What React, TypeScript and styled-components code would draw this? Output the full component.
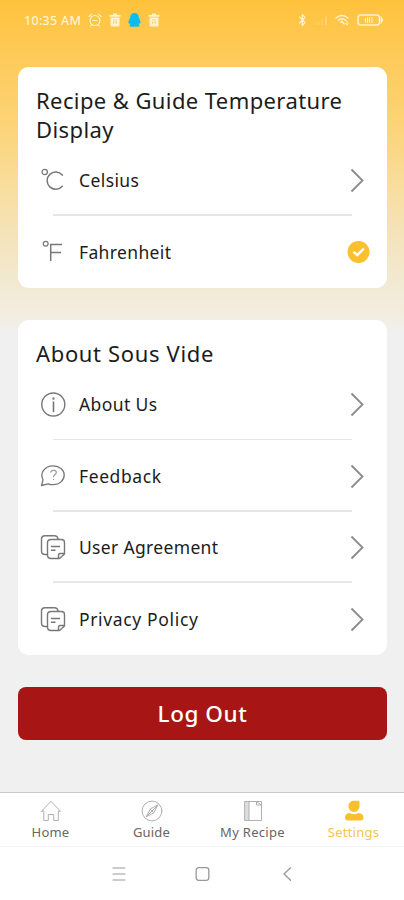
import React from 'react';
import styled, { createGlobalStyle } from 'styled-components';

const GlobalStyle = createGlobalStyle`
  *, *::before, *::after { box-sizing: border-box; }
  body { margin: 0; background: #fff; }
  svg { display: block; flex: none; overflow: visible; }
  button { font: inherit; border: 0; background: none; padding: 0; }
`;

const Screen = styled.div`
  display: flex;
  flex-direction: column;
  width: 404px;
  height: 900px;
  overflow: hidden;
  font-family: 'Noto Sans', sans-serif;
  color: #1c1c1c;
  background: #f0f0f0 linear-gradient(#ffc23c 0, #fecb5b 60px, #fcd47a 130px, #f7dfa6 200px, #f2e8cd 270px, #f3ede0 315px, #f0f0f0 332px) no-repeat;
`;

const StatusBar = styled.header`
  display: flex;
  justify-content: space-between;
  align-items: center;
  height: 40px;
  padding: 0 20px 0 24px;
  color: #fff3d0;
  flex: none;
`;

const Clock = styled.span`
  width: 57px;
  font-size: 12.5px;
  font-weight: 500;
  letter-spacing: 0.3px;
  white-space: nowrap;
`;

const StatusGroup = styled.div<{ $gap: number }>`
  display: flex;
  align-items: center;
  gap: ${(p) => p.$gap}px;
`;

const Content = styled.main`
  display: flex;
  flex-direction: column;
  flex: 1;
  padding: 26.5px 17px 0 18px;
`;

const Card = styled.section`
  display: flex;
  flex-direction: column;
  margin-bottom: 32.5px;
  background: #fff;
  border-radius: 11px;
`;

const CardTitle = styled.h2<{ $spacing: number }>`
  margin: 0;
  padding: 19px 18px 0.5px;
  font-size: 22px;
  font-weight: 400;
  line-height: 29.5px;
  letter-spacing: ${(p) => p.$spacing}px;
`;

const Row = styled.div`
  display: flex;
  align-items: center;
  height: 71.4px;
  padding: 0 17px 1px 21px;
`;

const Divider = styled.hr`
  height: 1.5px;
  margin: -2px 35.5px 0.5px 35px;
  border: 0;
  background: #e6e6e6;
`;

const IconSlot = styled.span`
  display: flex;
  width: 40px;
  color: #777;
`;

const RowLabel = styled.span<{ $spacing: number }>`
  flex: 1;
  font-size: 17.5px;
  line-height: 24px;
  letter-spacing: ${(p) => p.$spacing}px;
`;

const LogOut = styled.button`
  height: 53px;
  padding-bottom: 1px;
  border-radius: 8px;
  background: #a81515;
  color: #fff;
  font-size: 22.5px;
  font-weight: 500;
  letter-spacing: 0.55px;
`;

const TabBar = styled.nav`
  display: grid;
  grid-template-columns: repeat(4, 101px);
  height: 55px;
  background: #fff;
  border-top: 1.5px solid #c9c9c9;
  border-bottom: 1px solid #f4f4f4;
  flex: none;
`;

const Tab = styled.button<{ $active?: boolean }>`
  display: flex;
  flex-direction: column;
  align-items: center;
  padding-top: 6.5px;
  color: ${(p) => (p.$active ? '#f8bf30' : '#b0b0b0')};
`;

const TabLabel = styled.span<{ $active?: boolean; $spacing: number }>`
  margin-top: 1.5px;
  font-size: 13px;
  line-height: 18px;
  letter-spacing: ${(p) => p.$spacing}px;
  color: ${(p) => (p.$active ? '#f3c64a' : '#666')};
`;

const SystemNav = styled.footer`
  display: flex;
  align-items: center;
  justify-content: space-between;
  height: 53px;
  padding: 0 112px;
  background: #fff;
  color: #999;
  flex: none;
`;

const line = { fill: 'none', stroke: 'currentColor', strokeLinecap: 'round', strokeLinejoin: 'round' } as const;

const AlarmIcon = () => (
  <svg width="14" height="14" viewBox="0 0 14 14" {...line} strokeWidth="1.1">
    <circle cx="7" cy="7.5" r="5" />
    <path d="M1 3.5 3.5 1.2M13 3.5 10.500 1.200M4.800 7.500h4.200M3.500 11.800 2.500 13M10.500 11.800 11.500 13" />
  </svg>
);
const TrashIcon = () => (
  <svg width="12" height="14" viewBox="0 0 12 14">
    <path fill="currentColor" d="M4 .5h4v1.500h3.500v1.800H.5V2H4zM1.500 4.500h9V12q0 1.500-1.500 1.500H3Q1.500 13.500 1.500 12z" />
    <path d="M4 7h4M4 9h4M4.500 11V9M7.500 11V9" stroke="#f8cd69" strokeWidth=".8" />
  </svg>
);
const PenguinIcon = () => (
  <svg width="13" height="14" viewBox="0 0 13 14">
    <path fill="#08bdf2" d="M6.500 0C3.800 0 2.200 2 2.200 4.500L.8 7.800C0 9.800.3 11 1.500 10.500l.8 1.100-.8.900c0 1.500 3.400 1.500 5 .9 1.600.6 5 .6 5-.9l-.8-.9.800-1.100c1.200.5 1.500-.7.700-2.700L10.800 4.500C10.800 2 9.200 0 6.500 0z" />
  </svg>
);
const BluetoothIcon = () => (
  <svg width="9" height="14" viewBox="0 0 9 14" {...line} strokeWidth="1.200">
    <path d="M1.500 4 7 9.500 4.300 12.500v-11L7 4.300 1.500 10" />
  </svg>
);
const SignalIcon = () => (
  <svg width="14" height="12" viewBox="0 0 14 12" fill="none" stroke="currentColor" strokeWidth="1.500">
    <path d="M2 9v2M5 7.500V11M8 5v6" opacity=".2" />
    <path d="M12 2.500V11" opacity=".4" />
  </svg>
);
const WifiIcon = () => (
  <svg width="15" height="12" viewBox="0 0 15 12" {...line} strokeWidth="1.500">
    <path d="M1 4Q7 -.8 13 4M3.500 6.200Q7 3.500 10.500 6.200M5.500 8.300 7 7.400l2 2.400" />
    <path d="M12 7v4M10.500 9.500 12 11l1.500-1.500" strokeWidth=".9" />
  </svg>
);
const BatteryIcon = () => (
  <svg width="27" height="12" viewBox="0 0 27 12" {...line} strokeWidth="1.500">
    <rect x="1" y="1" width="21.500" height="10" rx="3" />
    <path d="M24 2.500 26 6 24 9.500z" fill="currentColor" strokeWidth=".5" />
    <path d="M8.500 4.500v3.500M10.500 3.500v5M12.500 3.500v5M15 3.500v5" strokeWidth="1.100" />
  </svg>
);

const CelsiusIcon = () => (
  <svg width="26" height="26" viewBox="0 0 26 26" {...line} strokeWidth="1.250">
    <circle cx="5.700" cy="5" r="2.700" />
    <path d="M23.300 8.100A8.600 8.600 0 1 0 23.300 19.200" strokeWidth="1.500" />
  </svg>
);
const FahrenheitIcon = () => (
  <svg width="26" height="26" viewBox="0 0 26 26" {...line} strokeWidth="1.200">
    <circle cx="6.700" cy="4.800" r="2.400" />
    <path d="M11.700 22V5.500H23M11.700 13.500h10.300" strokeWidth="1.500" strokeLinecap="butt" />
  </svg>
);
const InfoIcon = () => (
  <svg width="26" height="26" viewBox="0 0 26 26" {...line} strokeWidth="1.400">
    <circle cx="14.300" cy="13.500" r="11.500" />
    <path d="M14.500 11v9.500" strokeWidth="1.600" />
    <circle cx="14.500" cy="7.500" r=".5" />
  </svg>
);
const FeedbackIcon = () => (
  <svg width="26" height="26" viewBox="0 0 26 26" {...line} strokeWidth="1.300">
    <path d="M4 16.800C.5 10.500 5.500 2.800 14.200 2.800c6.300 0 11 4 11 9.300s-4.700 9.600-11 9.600c-2 0-3.500-.3-5-.9L2.500 22.500z" />
    <path d="M11.800 9.300c.2-2.800 5.500-2.800 5.500.1 0 2.100-2.700 2-2.700 4.200M14.600 16.300v.2" strokeWidth="1.100" opacity=".8" />
  </svg>
);
const DocumentsIcon = () => (
  <svg width="26" height="26" viewBox="0 0 26 26" {...line} strokeWidth="1.400">
    <path d="M8.500 20.500H6q-3.500 0-3.500-3.500V5Q2.500 1.800 6 1.800h9.500q3 0 3.500 3" />
    <path d="M12 5.500h10.500q3 0 3 3V20l-5 4.500H12q-3.500 0-3.500-3.500V9q0-3.500 3.500-3.500zM19.500 24.500V21.500q0-2 2-2h4" />
    <path d="M12.500 12.500h8M12.500 16.300h3.500" strokeWidth="1.400" />
  </svg>
);
const ChevronIcon = () => (
  <svg width="20" height="24" viewBox="0 0 20 24" fill="none" stroke="#8b8b8b" strokeWidth="1.800">
    <path d="M1.500 1.500 12.500 12.500 1.500 23.500" />
  </svg>
);
const CheckIcon = () => (
  <svg width="22" height="22" viewBox="0 0 23 23">
    <circle cx="11" cy="11.500" r="11.500" fill="#fac02d" />
    <path d="M5.800 11.300 9.700 14.800 16.500 8" fill="none" stroke="#fff" strokeWidth="2.500" />
  </svg>
);

const HomeIcon = () => (
  <svg width="22" height="22" viewBox="0 0 22 22" {...line} strokeWidth="1">
    <path d="M1.500 11.300 11 1.300l9.500 10h-2.200V20.500h-4.500v-6H8.300v6H3.800v-9.200z" />
  </svg>
);
const CompassIcon = () => (
  <svg width="22" height="22" viewBox="0 0 22 22" {...line} strokeWidth="1">
    <circle cx="11" cy="11" r="9.900" />
    <path d="M16.800 5.200 12.800 12.800 5.200 16.800 9.200 9.200zM9.200 9.200l3.600 3.600M5.200 16.800 16.800 5.200" />
  </svg>
);
const BookIcon = () => (
  <svg width="22" height="22" viewBox="0 0 22 22" {...line} strokeWidth="1">
    <path fill="#ddd" stroke="none" d="M3 1.500h4v19H3z" />
    <path d="M3 1.500h16.500v19H3zM7 1.500v19M14.500 1.500V5h5M14.500 1.500l5 3.500" />
  </svg>
);
const PersonIcon = () => (
  <svg width="22" height="22" viewBox="0 0 22 22" fill="currentColor">
    <path d="M11.500.8H15q1.500 0 1.500 1.500V6A5.600 5.600 0 1 1 11.500.8z" />
    <path d="M6.500 13Q11 15.500 15.500 13 20.500 13.500 20.500 17.500q0 3-3 3H5q-3 0-3-3Q2 13.500 6.500 13z" />
  </svg>
);

type Item = { label: string; spacing: number; Icon: React.FC; selected?: boolean };

const units: Item[] = [
  { label: 'Celsius', spacing: 0.4, Icon: CelsiusIcon },
  { label: 'Fahrenheit', spacing: 0.35, Icon: FahrenheitIcon, selected: true },
];
const about: Item[] = [
  { label: 'About Us', spacing: 0.4, Icon: InfoIcon },
  { label: 'Feedback', spacing: 0.6, Icon: FeedbackIcon },
  { label: 'User Agreement', spacing: 0.33, Icon: DocumentsIcon },
  { label: 'Privacy Policy', spacing: 0.65, Icon: DocumentsIcon },
];
const tabs: { label: string; spacing: number; Icon: React.FC; active?: boolean }[] = [
  { label: 'Home', spacing: 0.2, Icon: HomeIcon },
  { label: 'Guide', spacing: 0.2, Icon: CompassIcon },
  { label: 'My Recipe', spacing: 0.3, Icon: BookIcon },
  { label: 'Settings', spacing: 0.25, Icon: PersonIcon, active: true },
];

const SettingsRows = ({ items }: { items: Item[] }) => (
  <>
    {items.map(({ label, spacing, Icon, selected }, i) => (
      <React.Fragment key={label}>
        <Row>
          <IconSlot><Icon /></IconSlot>
          <RowLabel $spacing={spacing}>{label}</RowLabel>
          {selected ? <CheckIcon /> : <ChevronIcon />}
        </Row>
        {i < items.length - 1 && <Divider />}
      </React.Fragment>
    ))}
  </>
);

export default function App() {
  return (
    <>
      <GlobalStyle />
      <Screen>
        <StatusBar>
          <StatusGroup $gap={7}>
            <Clock>10:35 AM</Clock>
            <AlarmIcon />
            <TrashIcon />
            <PenguinIcon />
            <TrashIcon />
          </StatusGroup>
          <StatusGroup $gap={7}>
            <BluetoothIcon />
            <SignalIcon />
            <WifiIcon />
            <BatteryIcon />
          </StatusGroup>
        </StatusBar>
        <Content>
          <Card>
            <CardTitle $spacing={0.4}>Recipe &amp; Guide Temperature Display</CardTitle>
            <SettingsRows items={units} />
          </Card>
          <Card>
            <CardTitle $spacing={0.65}>About Sous Vide</CardTitle>
            <SettingsRows items={about} />
          </Card>
          <LogOut>Log Out</LogOut>
        </Content>
        <TabBar>
          {tabs.map(({ label, spacing, Icon, active }) => (
            <Tab key={label} $active={active}>
              <Icon />
              <TabLabel $active={active} $spacing={spacing}>{label}</TabLabel>
            </Tab>
          ))}
        </TabBar>
        <SystemNav>
          <svg width="14" height="14" viewBox="0 0 14 14" {...line} strokeWidth="1.100"><path d="M1 1h12M1 7h12M1 13h12" /></svg>
          <svg width="14" height="14" viewBox="0 0 14 14" {...line} strokeWidth="1.300"><rect x="-.8" y=".7" width="12.600" height="12.600" rx="2.500" /></svg>
          <svg width="10" height="14" viewBox="0 0 10 14" {...line} strokeWidth="1.300"><path d="M8.500 .7 2 7 8.500 13.300" /></svg>
        </SystemNav>
      </Screen>
    </>
  );
}
